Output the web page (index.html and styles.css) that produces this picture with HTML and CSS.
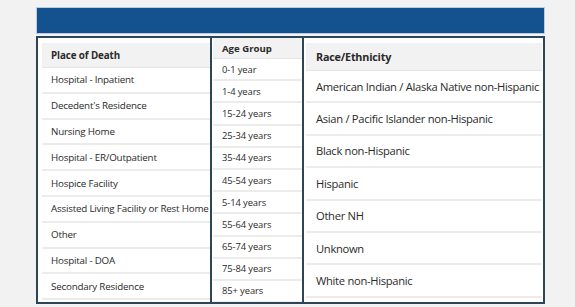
FILE: index.html
```html
<!DOCTYPE html>
<html>
<head>
<meta charset="utf-8">
<link rel="stylesheet" href="styles.css">
</head>
<body>
<div class="wrap">
  <div class="banner"></div>
  <div class="panels">
    <div class="panel p1">
      <div class="list">
        <div class="hd">Place of Death</div>
        <div class="row">Hospital - Inpatient</div>
        <div class="row">Decedent's Residence</div>
        <div class="row">Nursing Home</div>
        <div class="row">Hospital - ER/Outpatient</div>
        <div class="row">Hospice Facility</div>
        <div class="row">Assisted Living Facility or Rest Home</div>
        <div class="row">Other</div>
        <div class="row">Hospital - DOA</div>
        <div class="row">Secondary Residence</div>
      </div>
    </div>
    <div class="panel p2">
      <div class="list">
        <div class="hd">Age Group</div>
        <div class="row">0-1 year</div>
        <div class="row">1-4 years</div>
        <div class="row">15-24 years</div>
        <div class="row">25-34 years</div>
        <div class="row">35-44 years</div>
        <div class="row">45-54 years</div>
        <div class="row">5-14 years</div>
        <div class="row">55-64 years</div>
        <div class="row">65-74 years</div>
        <div class="row">75-84 years</div>
        <div class="row">85+ years</div>
      </div>
    </div>
    <div class="panel p3">
      <div class="list">
        <div class="hd">Race/Ethnicity</div>
        <div class="row">American Indian / Alaska Native non-Hispanic</div>
        <div class="row">Asian / Pacific Islander non-Hispanic</div>
        <div class="row">Black non-Hispanic</div>
        <div class="row">Hispanic</div>
        <div class="row">Other NH</div>
        <div class="row">Unknown</div>
        <div class="row">White non-Hispanic</div>
      </div>
    </div>
  </div>
</div>
</body>
</html>
```
FILE: styles.css
```css
html, body {
  margin: 0;
  padding: 0;
  background: #f2f2f2;
  font-family: "Open Sans", "Noto Sans", sans-serif;
  color: #2a2a2a;
}
.wrap {
  width: 509px;
  margin-left: 36px;
  padding-top: 7px;
}
.banner {
  height: 25px;
  background: #14528f;
  border: 1px solid #b9cce0;
  width: 507px;
}
.panels {
  margin-top: 2px;
  display: flex;
  border: 2px solid #2c4658;
  height: 264px;
  background: #fff;
}
.panel {
  overflow: hidden;
  background: #fff;
  box-sizing: border-box;
}
.p1 {
  width: 174px;
  flex: none;
  border-right: 2px solid #2c4658;
  padding: 5px 0 0 4px;
}
.p2 {
  width: 92px;
  flex: none;
  border-right: 2px solid #2c4658;
  padding: 0 0 0 1px;
}
.p3 {
  flex: 1;
  padding: 5px 1px 0 2px;
}
.list {
  display: flex;
  flex-direction: column;
}
.p1 .list { width: 180px; }
.hd {
  background: #f2f2f2;
  font-weight: bold;
  display: flex;
  align-items: center;
  border-bottom: 1px solid #e4e4e4;
  box-sizing: border-box;
}
.row {
  display: flex;
  align-items: center;
  border-bottom: 2px solid #ececec;
  box-sizing: border-box;
  white-space: nowrap;
}
.p1 .hd { height: 25px; font-size: 9.8px; letter-spacing: -0.1px; padding-left: 9px; }
.p1 .row { height: 25.8px; font-size: 9.8px; letter-spacing: -0.2px; padding-left: 9px; }
.p2 .hd { height: 21px; font-size: 9.6px; padding-left: 9px; }
.p2 .row { height: 22.2px; font-size: 9.4px; letter-spacing: -0.1px; padding-left: 9px; }
.p3 .hd { height: 28px; font-size: 10.8px; letter-spacing: -0.2px; padding-left: 10px; }
.p3 .row { height: 32.4px; font-size: 11.2px; letter-spacing: -0.3px; padding-left: 10px; }
```
